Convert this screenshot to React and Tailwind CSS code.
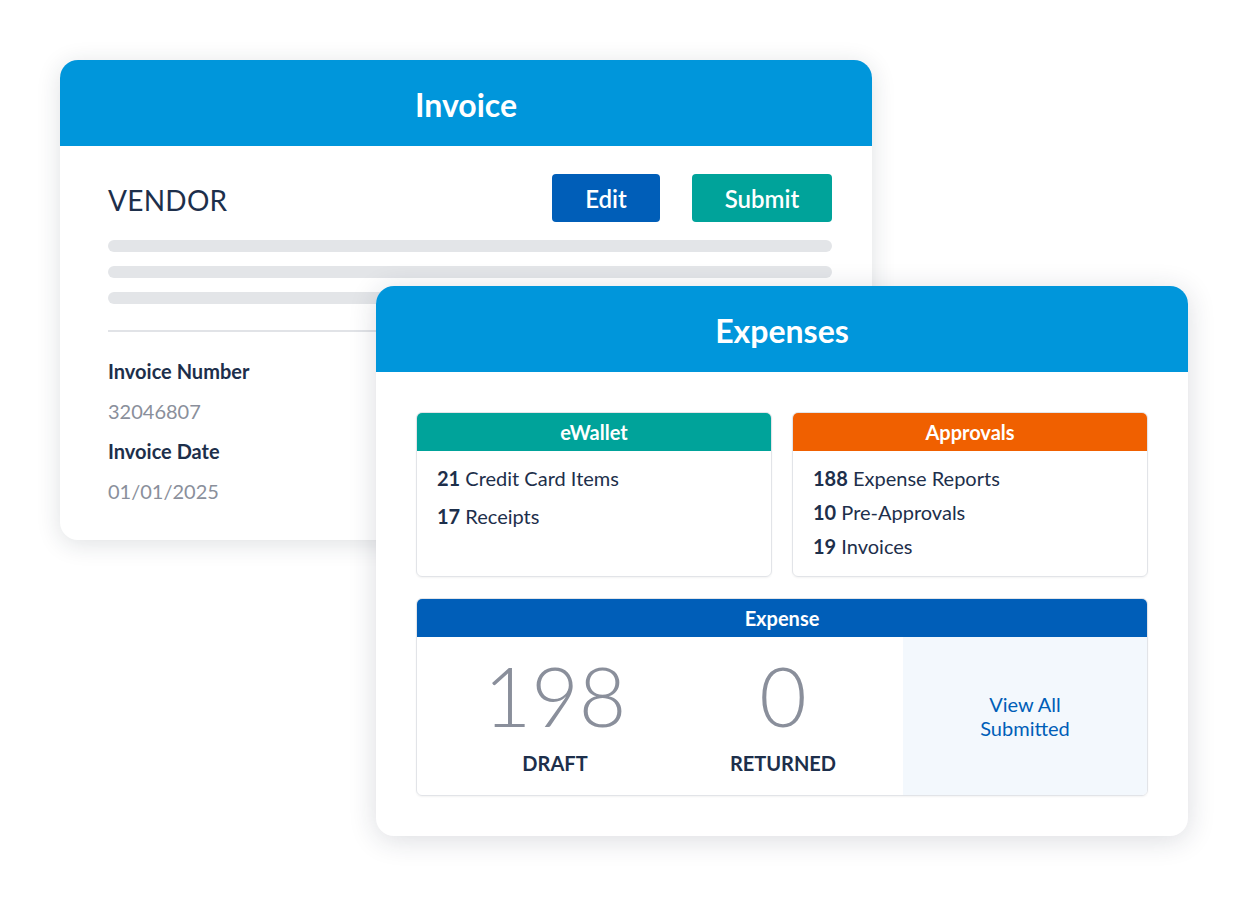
import React from "react";

const font = { fontFamily: "Lato, 'Open Sans', sans-serif" };

export default function App() {
  return (
    <div className="relative h-[900px] w-[1248px] overflow-hidden bg-white" style={font}>
      <InvoiceCard />
      <ExpensesCard />
    </div>
  );
}

function InvoiceCard() {
  return (
    <div className="absolute left-[60px] top-[60px] h-[480px] w-[812px] overflow-hidden rounded-[18px] bg-white shadow-[0_4px_24px_rgba(30,40,60,0.14)]">
      <div className="flex h-[86px] items-center justify-center bg-[#0096db] pt-[3px]">
        <h2 className="text-[32px] font-bold text-white">Invoice</h2>
      </div>
      <div className="pl-12 pr-10 pt-7">
        <div className="flex h-12 items-center">
          <p className="flex-1 pt-[3px] text-[28px] tracking-[0.01em] text-[#1d2f4b]">VENDOR</p>
          <button className="h-12 w-[108px] rounded-[4px] bg-[#005eb8] pt-[2px] text-[24px] font-semibold text-white">
            Edit
          </button>
          <button className="ml-8 h-12 w-[140px] rounded-[4px] bg-[#00a39a] pt-[2px] text-[24px] font-semibold text-white">
            Submit
          </button>
        </div>
        <div className="mt-[18px] flex flex-col gap-[14px]">
          <div className="h-3 rounded-full bg-[#e3e5e8]" />
          <div className="h-3 rounded-full bg-[#e3e5e8]" />
          <div className="h-3 rounded-full bg-[#e3e5e8]" />
        </div>
        <div className="mt-[26px] h-[2px] bg-[#e1e3e7]" />
        <div className="mt-[19px] text-[20px] leading-[40px]">
          <p className="font-bold text-[#1d2f4b]">Invoice Number</p>
          <p className="text-[#8a8f9b]">32046807</p>
          <p className="font-bold text-[#1d2f4b]">Invoice Date</p>
          <p className="text-[#8a8f9b]">01/01/2025</p>
        </div>
      </div>
    </div>
  );
}

function ExpensesCard() {
  return (
    <div className="absolute left-[376px] top-[286px] h-[550px] w-[812px] overflow-hidden rounded-[18px] bg-white shadow-[0_4px_28px_rgba(30,40,60,0.16)]">
      <div className="flex h-[86px] items-center justify-center bg-[#0096db] pt-[3px]">
        <h2 className="text-[32px] font-bold text-white">Expenses</h2>
      </div>
      <div className="p-10">
        <div className="grid grid-cols-2 gap-5">
          <Panel title="eWallet" color="bg-[#00a39a]">
            <div className="flex flex-col gap-[16px] pt-[16px]">
              <Item n="21" label="Credit Card Items" />
              <Item n="17" label="Receipts" />
            </div>
          </Panel>
          <Panel title="Approvals" color="bg-[#f06000]">
            <div className="flex flex-col gap-[12px] pt-[16px]">
              <Item n="188" label="Expense Reports" />
              <Item n="10" label="Pre-Approvals" />
              <Item n="19" label="Invoices" />
            </div>
          </Panel>
        </div>

        <div className="mt-[21px] overflow-hidden rounded-[6px] border border-[#e2e4e8] shadow-[0_1px_2px_rgba(0,0,0,0.05)]">
          <div className="flex h-[38px] items-center justify-center bg-[#005eb8] text-[20px] font-bold text-white">
            Expense
          </div>
          <div className="flex h-[158px]">
            <div className="flex flex-1">
              <Stat value="198" label="DRAFT" width="w-[276px]" />
              <Stat value="0" label="RETURNED" width="w-[180px]" />
            </div>
            <div className="flex w-[244px] items-center justify-center bg-[#f3f8fd] text-center text-[20px] leading-[24px] text-[#005eb8]">
              <p>
                View All
                <br />
                Submitted
              </p>
            </div>
          </div>
        </div>
      </div>
    </div>
  );
}

function Panel({ title, color, children }) {
  return (
    <div className="h-[165px] overflow-hidden rounded-[6px] border border-[#e2e4e8] shadow-[0_1px_2px_rgba(0,0,0,0.05)]">
      <div className={`flex h-[38px] items-center justify-center ${color} text-[20px] font-bold text-white`}>
        {title}
      </div>
      <div className="px-5">{children}</div>
    </div>
  );
}

function Item({ n, label }) {
  return (
    <p className="text-[20px] leading-[22px] text-[#1d2f4b]">
      <span className="font-bold">{n}</span> {label}
    </p>
  );
}

function Stat({ value, label, width }) {
  return (
    <div className={`flex ${width} flex-col items-center pt-[12px]`}>
      <p className="text-[82px] font-light leading-[92px] text-[#8a8f9b]">{value}</p>
      <p className="mt-[10px] text-[20px] font-bold leading-[24px] text-[#1d2f4b]">{label}</p>
    </div>
  );
}
